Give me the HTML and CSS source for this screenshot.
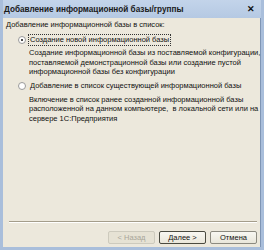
FILE: index.html
```html
<!DOCTYPE html>
<html>
<head>
    <meta charset="UTF-8">
    <title>Добавление информационной базы/группы</title>
    <link rel="stylesheet" href="styles.css">
</head>
<body>
    <div class="window">
        <div class="titlebar">
            <span class="title">Добавление информационной базы/группы</span>
            <span class="close">&#x2715;</span>
        </div>
        <div class="content">
            <div class="caption">Добавление информационной базы в список:</div>

            <div class="option">
                <span class="radio checked"></span>
                <span class="option-label focused">Создание новой информационной базы</span>
            </div>
            <div class="desc">Создание информационной базы из поставляемой конфигурации,<br>поставляемой демонстрационной базы или создание пустой<br>информационной базы без конфигурации</div>

            <div class="option">
                <span class="radio"></span>
                <span class="option-label">Добавление в список существующей информационной базы</span>
            </div>
            <div class="desc">Включение в список ранее созданной информационной базы<br>расположенной на данном компьютере, &nbsp;в локальной сети или на<br>сервере 1С:Предприятия</div>

            <div class="spacer"></div>
            <div class="separator"></div>
            <div class="buttons">
                <button class="btn" disabled>&lt; Назад</button>
                <button class="btn default">Далее &gt;</button>
                <button class="btn cancel">Отмена</button>
            </div>
        </div>
    </div>
</body>
</html>
```

FILE: styles.css
```css
body {
    margin: 0;
    font-family: "Liberation Sans", Arial, sans-serif;
    font-size: 7.5px;
    color: #101010;
}
.window {
    width: 264px;
    height: 250px;
    box-sizing: border-box;
    background: #a9bedb;
    padding: 0 3px 3px 3px;
    display: flex;
    flex-direction: column;
}
.titlebar {
    height: 18px;
    display: flex;
    align-items: center;
    justify-content: space-between;
    padding: 0 6px 0 1px;
    background: linear-gradient(#c3d4ea, #b5c9e3);
}
.title {
    font-weight: bold;
    font-size: 8.2px;
    color: #1a1a1a;
}
.close {
    font-weight: bold;
    font-size: 9px;
    color: #111;
}
.content {
    flex: 1;
    background: #ece8dc;
    padding: 2px 3px 0 3px;
    display: flex;
    flex-direction: column;
    border-right: 1px solid #7f95b5;
    white-space: nowrap;
}
.caption {
    line-height: 10px;
}
.option {
    display: flex;
    align-items: center;
    margin: 4px 0 0 12px;
    height: 11px;
}
.radio {
    width: 8px;
    height: 8px;
    box-sizing: border-box;
    border: 1px solid #9a9a9a;
    border-radius: 50%;
    background: #fff;
    margin-right: 2px;
    position: relative;
}
.radio.checked::after {
    content: "";
    position: absolute;
    left: 2px;
    top: 2px;
    width: 2px;
    height: 2px;
    border-radius: 50%;
    background: #111;
}
.option-label {
    padding: 0 1px;
    line-height: 10px;
    border: 1px solid transparent;
}
.option-label.focused {
    border: 1px dotted #333;
}
.desc {
    margin: 3px 0 0 23px;
    line-height: 9.6px;
}
.spacer {
    flex: 1;
}
.separator {
    height: 0;
    border-top: 1px solid #a49d8b;
    border-bottom: 1px solid #fff;
    margin: 0 0 0 3px;
}
.buttons {
    display: flex;
    justify-content: flex-end;
    gap: 4px;
    padding: 8px 0 3px 0;
}
.btn {
    width: 47px;
    height: 13px;
    padding: 0;
    font-family: inherit;
    font-size: 7.5px;
    background: linear-gradient(#f8f7f2, #e9e6da);
    border: 1px solid #8c8a80;
    border-radius: 2px;
    color: #111;
}
.btn[disabled] {
    color: #a8a699;
    border-color: #cdcabd;
    background: #e6e2d4;
}
.btn.default {
    border-color: #4a4a40;
}
```
